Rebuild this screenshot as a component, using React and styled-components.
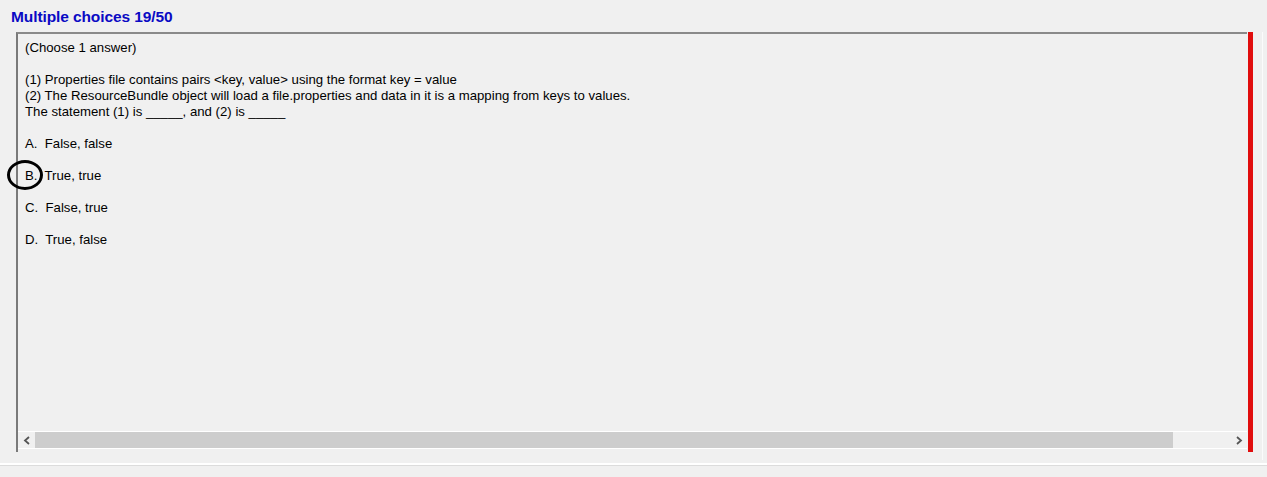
import React from "react";
import styled, { createGlobalStyle } from "styled-components";

const Global = createGlobalStyle`
  html, body { margin: 0; padding: 0; background: #f0f0f0; }
  body { font-family: "Liberation Sans", Arial, sans-serif; }
`;

const Page = styled.div`
  width: 1267px;
  height: 477px;
  background: #f0f0f0;
  display: flex;
  flex-direction: column;
  overflow: hidden;
  position: relative;
`;

const Title = styled.div`
  height: 32px;
  box-sizing: border-box;
  padding: 8px 0 0 11px;
  font-size: 15.5px;
  font-weight: bold;
  color: #0a0ac4;
  line-height: 17px;
  letter-spacing: -0.1px;
`;

const MainRow = styled.div`
  display: flex;
  height: 420px;
  padding-left: 16px;
`;

const Panel = styled.div`
  flex: 1;
  display: flex;
  flex-direction: column;
  border-top: 2px solid #8a8a8a;
  border-left: 2px solid #7a7a7a;
  position: relative;
`;

const Content = styled.div`
  flex: 1;
  padding: 6px 0 0 7px;
  font-size: 13.2px;
  line-height: 16px;
  color: #000;
  position: relative;
`;

const Line = styled.div`
  height: 16px;
  white-space: pre;
`;

const Gap = styled.div`
  height: ${(p) => p.$h}px;
`;

const Option = styled.div`
  height: 32px;
  white-space: pre;
`;

const Circle = styled.span`
  position: absolute;
  left: -11px;
  top: 126px;
  width: 30px;
  height: 24px;
  border: 3.5px solid #000;
  border-radius: 50%;
`;

const ScrollBar = styled.div`
  height: 16px;
  margin-bottom: 3px;
  display: flex;
  align-items: stretch;
  border-top: 1px solid #ffffff;
  border-bottom: 1px solid #ffffff;
  background: #f0f0f0;
`;

const Arrow = styled.div`
  width: 17px;
  display: flex;
  align-items: center;
  justify-content: center;
  color: #606060;
`;

const Track = styled.div`
  flex: 1;
  display: flex;
  align-items: stretch;
`;

const Thumb = styled.div`
  width: 1138px;
  background: #cdcdcd;
`;

const RedBar = styled.div`
  width: 5px;
  background: #e00d0d;
  margin-left: 1px;
`;

const Gutter = styled.div`
  width: 14px;
  display: flex;
  justify-content: flex-end;
  padding-right: 4px;
  box-sizing: border-box;
`;

const GutterLine = styled.div`
  width: 1px;
  background: #fbfbfb;
  height: 428px;
`;

const Bottom = styled.div`
  flex: 1;
  display: flex;
  flex-direction: column;
  padding-top: 11px;
`;

const WhiteRule = styled.div`
  height: 2px;
  background: #ffffff;
`;

const GrayRule = styled.div`
  height: 1px;
  background: #dcdcdc;
`;

const Chevron = ({ dir }) => (
  <svg width="8" height="9" viewBox="0 0 8 9">
    <path
      d={dir === "left" ? "M6 1 L2 4.5 L6 8" : "M2 1 L6 4.5 L2 8"}
      fill="none"
      stroke="#555"
      strokeWidth="1.8"
    />
  </svg>
);

export default function App() {
  return (
    <>
      <Global />
      <Page>
        <Title>Multiple choices 19/50</Title>
        <MainRow>
          <Panel>
            <Content>
              <Line>(Choose 1 answer)</Line>
              <Gap $h={16} />
              <Line>(1) Properties file contains pairs &lt;key, value&gt; using the format key = value</Line>
              <Line>(2) The ResourceBundle object will load a file.properties and data in it is a mapping from keys to values.</Line>
              <Line>The statement (1) is _____, and (2) is _____</Line>
              <Gap $h={16} />
              <Option>A.  False, false</Option>
              <Option>B.  True, true</Option>
              <Option>C.  False, true</Option>
              <Option>D.  True, false</Option>
              <Circle />
            </Content>
            <ScrollBar>
              <Arrow>
                <Chevron dir="left" />
              </Arrow>
              <Track>
                <Thumb />
              </Track>
              <Arrow>
                <Chevron dir="right" />
              </Arrow>
            </ScrollBar>
          </Panel>
          <RedBar />
          <Gutter>
            <GutterLine />
          </Gutter>
        </MainRow>
        <Bottom>
          <WhiteRule />
          <GrayRule />
        </Bottom>
      </Page>
    </>
  );
}
